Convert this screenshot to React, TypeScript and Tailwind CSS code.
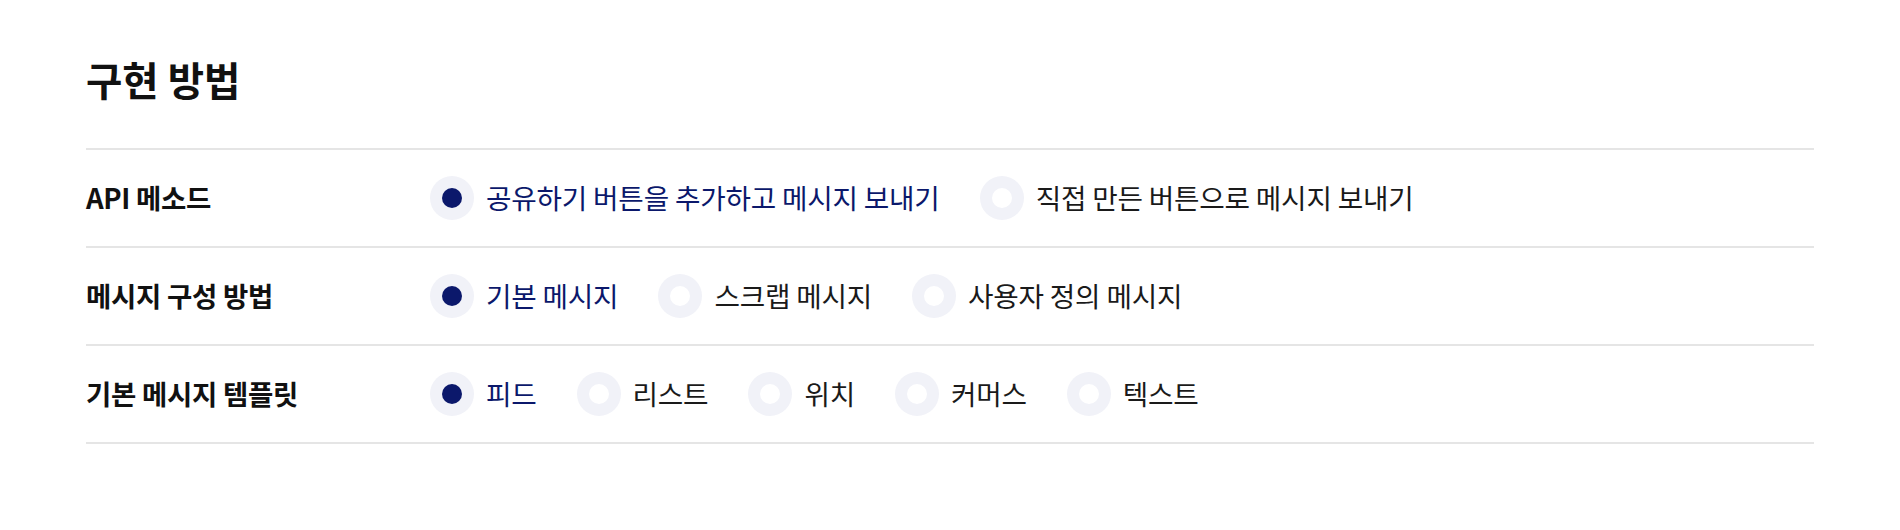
import React, { useState } from 'react';

const font = { fontFamily: '"Noto Sans CJK KR", "Noto Sans", sans-serif' };

const groups = [
  { label: 'API 메소드', options: ['공유하기 버튼을 추가하고 메시지 보내기', '직접 만든 버튼으로 메시지 보내기'] },
  { label: '메시지 구성 방법', options: ['기본 메시지', '스크랩 메시지', '사용자 정의 메시지'] },
  { label: '기본 메시지 템플릿', options: ['피드', '리스트', '위치', '커머스', '텍스트'] },
];

const Radio = ({ label, checked, onClick }) => (
  <button onClick={onClick} className="flex items-center gap-[12px] mr-[40px]">
    <span className="w-[44px] h-[44px] rounded-full bg-[#f1f2f8] flex items-center justify-center">
      <span className={`w-[20px] h-[20px] rounded-full ${checked ? 'bg-[#0b186b]' : 'bg-white'}`} />
    </span>
    <span className={`text-[27.7px] tracking-[-0.2px] ${checked ? 'text-[#0b186b]' : 'text-[#1a1a1a]'}`}>{label}</span>
  </button>
);

export default function App() {
  const [sel, setSel] = useState([0, 0, 0]);

  return (
    <div className="bg-white w-[1900px] h-[530px] px-[86px] pt-[53px]" style={font}>
      <h2 className="text-[39.5px] font-bold text-[#111] leading-[52px] mb-[43px]">구현 방법</h2>
      <div className="border-t-2 border-[#e5e5e5]">
        {groups.map((g, gi) => (
          <div key={g.label} className="flex items-center h-[98px] border-b-2 border-[#e5e5e5]">
            <div className="w-[344px] text-[27.5px] font-bold text-[#111] tracking-[-0.3px]">{g.label}</div>
            <div className="flex items-center">
              {g.options.map((o, oi) => (
                <Radio key={o} label={o} checked={sel[gi] === oi} onClick={() => setSel(sel.map((v, i) => (i === gi ? oi : v)))} />
              ))}
            </div>
          </div>
        ))}
      </div>
    </div>
  );
}
